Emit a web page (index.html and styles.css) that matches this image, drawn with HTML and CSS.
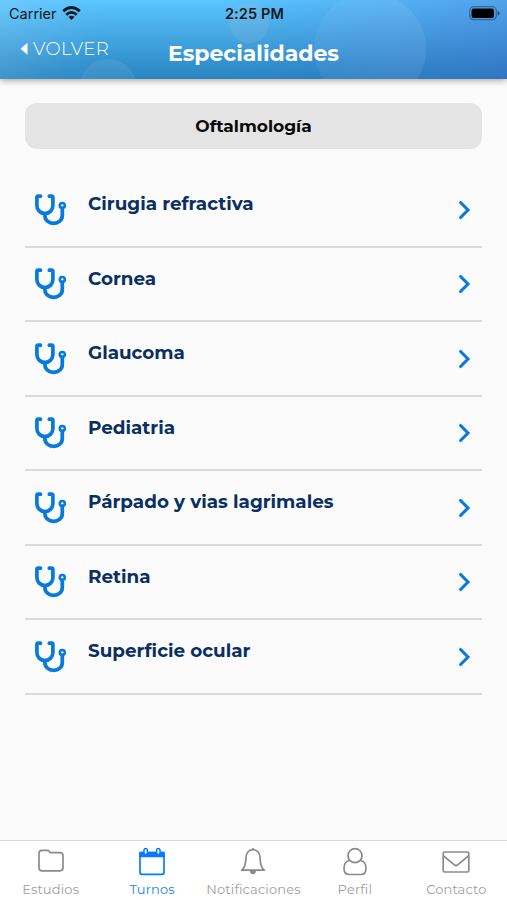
FILE: index.html
```html
<!DOCTYPE html>
<html lang="es">
<head>
<meta charset="utf-8">
<title>Especialidades</title>
<link rel="stylesheet" href="styles.css">
</head>
<body>
<svg class="defs" width="0" height="0" aria-hidden="true">
  <symbol id="stethoscope" viewBox="0 0 34 34">
    <g fill="none" stroke="currentColor" stroke-width="3.7" stroke-linecap="round" stroke-linejoin="round">
      <path d="M6.500 3.200H4.300Q2.900 3.200 2.900 4.800v7.600c0 4.500 3.300 8.100 8 8.100s8-3.600 8-8.100V4.800q0-1.600-1.400-1.600H15.300"/>
      <path d="M10.900 20.500v2c0 4.700 3.800 7.900 8.700 7.900s8.700-3.200 8.700-7.900v-7.300"/>
    </g>
    <circle cx="28.300" cy="12.500" r="2.500" fill="none" stroke="currentColor" stroke-width="2.600"/>
  </symbol>
  <symbol id="chevron" viewBox="0 0 14 20">
    <path d="M2.600 2.500 10 10l-7.400 7.500" fill="none" stroke="currentColor" stroke-width="3.100" stroke-linecap="round"/>
  </symbol>
</svg>
<div class="app">
  <header class="header">
    <div class="bubbles"><i class="bubble small"></i><i class="bubble large"></i><i class="bubble low"></i></div>
    <div class="status">
      <div class="carrier"><span>Carrier</span>
        <svg width="19" height="15" viewBox="0 0 19 15"><g fill="none" stroke="#101820" stroke-width="2.800"><path d="M1.200 5.200q8.300-7.400 16.600 0"/><path d="M4.200 8.700q5.300-4.600 10.600 0"/></g><path d="M6.500 11q3-2.300 6 0l-3 3z" fill="#101820"/></svg>
      </div>
      <div class="time">2:25 PM</div>
      <svg class="battery" width="31" height="15" viewBox="0 0 31 15"><rect x=".7" y=".7" width="26.600" height="13" rx="4" fill="none" stroke="#24587c" stroke-opacity=".75" stroke-width="1.200"/><rect x="2.500" y="2.500" width="22.500" height="9.400" rx="2.200"/><path d="M28.600 4.700q2 .7 2 2.500t-2 2.500z" fill="#24587c"/></svg>
    </div>
    <div class="nav">
      <div class="back"><svg width="8" height="14" viewBox="0 0 8 14"><path d="M7.500.8v12L.5 6.800z" fill="#fff"/></svg><span>VOLVER</span></div>
      <h1>Especialidades</h1>
    </div>
  </header>
  <main>
    <div class="group">Oftalmología</div>
    <ul>
      <li><svg class="steth"><use href="#stethoscope"/></svg><span>Cirugia refractiva</span><svg class="chev"><use href="#chevron"/></svg></li>
      <li><svg class="steth"><use href="#stethoscope"/></svg><span>Cornea</span><svg class="chev"><use href="#chevron"/></svg></li>
      <li><svg class="steth"><use href="#stethoscope"/></svg><span>Glaucoma</span><svg class="chev"><use href="#chevron"/></svg></li>
      <li><svg class="steth"><use href="#stethoscope"/></svg><span>Pediatria</span><svg class="chev"><use href="#chevron"/></svg></li>
      <li><svg class="steth"><use href="#stethoscope"/></svg><span>Párpado y vias lagrimales</span><svg class="chev"><use href="#chevron"/></svg></li>
      <li><svg class="steth"><use href="#stethoscope"/></svg><span>Retina</span><svg class="chev"><use href="#chevron"/></svg></li>
      <li><svg class="steth"><use href="#stethoscope"/></svg><span>Superficie ocular</span><svg class="chev"><use href="#chevron"/></svg></li>
    </ul>
  </main>
  <nav class="tabs">
    <div class="tab"><svg viewBox="0 0 28 30"><path d="M5 3.300h5q2 0 2.300 1.300.3 1 1.500 1H23q3 0 3 3v12.200q0 3-3 3H5q-3 0-3-3V6.300q0-3 3-3z"/></svg><span>Estudios</span></div>
    <div class="tab active"><svg viewBox="0 0 28 30"><path d="M3.500 5.500h21q1.500 0 1.500 1.500v18.300q0 2-2 2H4q-2 0-2-2V7q0-1.500 1.500-1.500z"/><path class="solid" d="M2 5.500h24v3.800H2z"/><rect class="ring" x="6" y="1.500" width="3.400" height="6" rx="1.700"/><rect class="ring" x="18.600" y="1.500" width="3.400" height="6" rx="1.700"/></svg><span>Turnos</span></div>
    <div class="tab"><svg viewBox="0 0 28 30"><path d="M14 1v1.700M2.700 23.200c3.300-2.800 4.200-6.500 4.200-12.200 0-4.800 2.800-8.300 7.100-8.300s7.100 3.500 7.100 8.300c0 5.700.9 9.400 4.200 12.200z"/><path class="clapper" d="M11 24q.2 3.300 3 3.300t3-3.300z"/></svg><span>Notificaciones</span></div>
    <div class="tab"><svg viewBox="0 0 28 30"><circle cx="14" cy="8.700" r="7"/><path d="M8.300 13.500C4.500 14.400 3 17.800 3 21.500c0 4 2 6 5 6h12c3 0 5-2 5-6 0-3.700-1.500-7.100-5.300-8"/></svg><span>Perfil</span></div>
    <div class="tab"><svg viewBox="0 0 28 30"><rect x="1.200" y="5" width="25.600" height="20" rx="1.500"/><path d="m1.500 8.900 10.800 9q1.700 1.400 3.400 0l10.800-9"/></svg><span>Contacto</span></div>
  </nav>
</div>
</body>
</html>
```
FILE: styles.css
```css
* { box-sizing: border-box; }
body { margin: 0; background: #fbfbfb; font-family: Montserrat, Inter, sans-serif; font-variant-ligatures: none; }
.defs { position: absolute; }
.app { height: 900px; display: flex; flex-direction: column; }
.header {
  position: relative; height: 79px; flex: none;
  background: linear-gradient(90deg, #ffffff1c 0, #fff0 20%, #3f4fc000 45%, #3f50c04d 100%), linear-gradient(#5ac5ff, #2985c2);
  box-shadow: 0 1px 7px #0006;
}
.bubbles { position: absolute; inset: 0; overflow: hidden; }
.bubble { position: absolute; border-radius: 50%; }
.small { width: 40px; height: 40px; left: 229px; top: 3px; background: #a8bac830; }
.large { width: 112px; height: 112px; left: 314px; top: -7px; background: linear-gradient(90deg, #ffffff0c, #ffffff14); }
.low { width: 58px; height: 58px; left: 79px; top: 59px; background: #c8d0d81c; }
.status { position: relative; height: 27px; display: grid; grid-template-columns: 1fr auto 1fr; align-items: center; padding: 0 7px 1px 9px; color: #101820; font: 14.500px Inter, sans-serif; }
.carrier { display: flex; align-items: center; gap: 6px; }
.carrier svg { margin-left: -1px; }
.time { font-weight: 600; letter-spacing: .15px; }
.battery { justify-self: end; }
.nav { position: relative; height: 52px; display: grid; grid-template-columns: 1fr auto 1fr; color: #fff; padding: 0 20px; }
.back { display: flex; align-items: center; gap: 5px; height: 44px; font-size: 18px; font-weight: 300; letter-spacing: .4px; }
h1 { margin: 0; line-height: 53px; font-size: 22px; font-weight: 700; letter-spacing: -.04px; }
main { flex: 1; padding: 24px 25px 0; }
.group { height: 46px; line-height: 46px; border-radius: 12px; background: #e4e4e4; text-align: center; font-size: 17px; font-weight: 700; color: #080808; }
ul { list-style: none; margin: 24.400px 0 0; padding: 0; }
li { height: 74.500px; display: flex; border-bottom: 2px solid #dadada; padding: 18px 10px 0 9px; color: #087add; }
li span { flex: 1; margin-left: 20px; line-height: 25px; color: #0a2f63; font-size: 18.350px; font-weight: 700; }
.steth { width: 34px; height: 34px; margin-top: 1.500px; }
.chev { width: 14px; height: 20px; margin-top: 8.500px; }
.tabs { height: 60px; display: grid; grid-template-columns: repeat(5, 1fr); border-top: 1px solid #d9d9d9; background: #fff; }
.tab { display: flex; flex-direction: column; align-items: center; padding-top: 6px; color: #a0a0a0; font-size: 13px; letter-spacing: .15px; white-space: nowrap; }
.tab svg { width: 28px; height: 30px; fill: none; stroke: #8a8a8a; stroke-width: 1.700; stroke-linejoin: round; }
.tab span { line-height: 18px; margin-top: 3px; }
.tab.active { color: #2484e8; }
.tab.active svg { stroke: #087bff; }
.tab .solid { fill: #087bff; }
.tab .ring { fill: #fff; stroke-width: 1.500; }
.tab .clapper { fill: #8a8a8a; stroke: none; }
```
